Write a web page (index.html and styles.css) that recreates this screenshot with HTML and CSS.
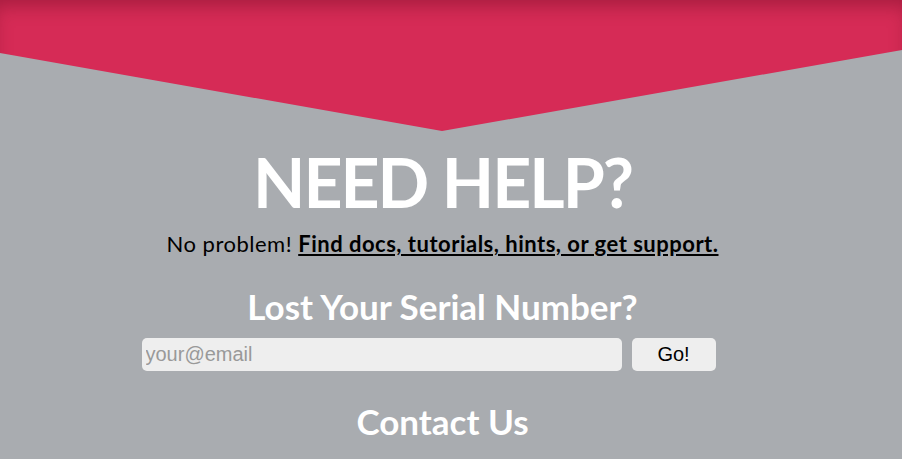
FILE: index.html
```html
<!DOCTYPE html>
<html>
<head>
    <title>Need Help?</title>
    <link rel="stylesheet" href="styles.css">
</head>
<body>
    <div class="banner"></div>
    <div class="help">
        <h1>NEED HELP?</h1>
        <p class="lead">No problem! <a href="#">Find docs, tutorials, hints, or get support.</a></p>
        <h2>Lost Your Serial Number?</h2>
        <form class="serial-form" onsubmit="return false;">
            <input type="text" placeholder="your@email">
            <button type="submit">Go!</button>
        </form>
        <h2 class="contact">Contact Us</h2>
    </div>
</body>
</html>
```

FILE: styles.css
```css
body {
    margin: 0;
    background-color: #a9acb0;
    font-family: 'Lato', 'Open Sans', Arial, sans-serif;
    overflow: hidden;
}
.banner {
    height: 131px;
    background-color: #d62b56;
    box-shadow: inset 0 12px 18px -6px rgba(80, 0, 20, 0.35);
    clip-path: polygon(0 0, 100% 0, 100% 50px, 442px 131px, 0 53px);
}
.help {
    text-align: center;
    color: #fff;
    padding-right: 17px;
}
.help h1 {
    margin: 11px 0 0;
    font-size: 68px;
    line-height: 80px;
    font-weight: bold;
    letter-spacing: -2px;
}
.lead {
    margin: 8px 0 0;
    font-size: 22px;
    line-height: 28px;
    letter-spacing: 0.5px;
    color: #000;
}
.lead a {
    color: #000;
    font-weight: bold;
}
.help h2 {
    margin: 28px 0 0;
    font-size: 35px;
    line-height: 40px;
    font-weight: bold;
}
.serial-form {
    display: flex;
    justify-content: center;
    gap: 10px;
    margin-top: 12px;
    padding-right: 28px;
}
.serial-form input {
    width: 480px;
    height: 33px;
    box-sizing: border-box;
    border: none;
    border-radius: 5px;
    background-color: #eee;
    padding: 0 4px;
    font-family: 'Liberation Sans', Arial, sans-serif;
    font-size: 20px;
}
.serial-form input::placeholder {
    color: #999;
}
.serial-form button {
    width: 84px;
    height: 33px;
    border: none;
    border-radius: 5px;
    background-color: #eee;
    font-family: 'Liberation Sans', Arial, sans-serif;
    font-size: 20px;
    color: #000;
}
.help h2.contact {
    margin-top: 30px;
}
```
